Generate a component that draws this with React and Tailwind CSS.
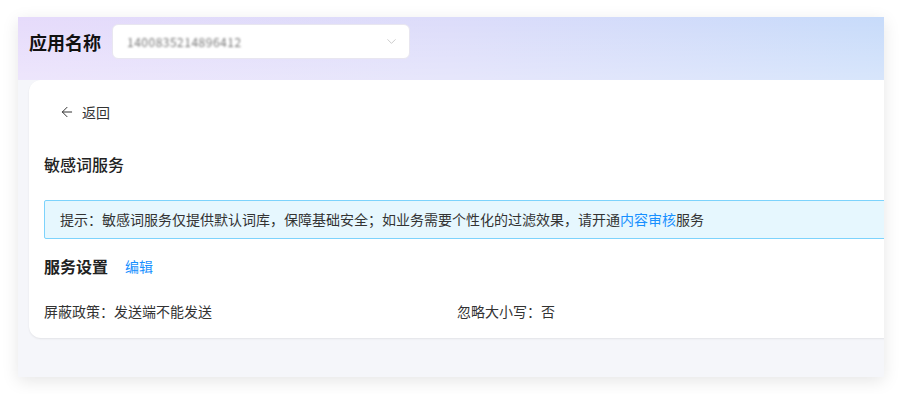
import { ArrowLeft, ChevronDown } from 'lucide-react';

const font = { fontFamily: '"Noto Sans CJK SC", "Noto Sans", sans-serif' };

function Header() {
  return (
    <div className="h-[63px] shrink-0 flex items-start gap-[11px] pl-[11px] pt-[7px] bg-[linear-gradient(to_right,#e6dbfb,#dcdcfa_50%,#c7dbfa)] relative">
      <div className="absolute inset-0 bg-[linear-gradient(to_bottom,rgba(255,255,255,0),rgba(255,255,255,0.3))]" />
      <span className="relative h-[35px] flex items-center text-[18px] leading-[26px] font-bold text-[#111]">应用名称</span>
      <div className="relative w-[298px] h-[35px] bg-white rounded-[6px] border border-[#e8e6f0] flex items-center justify-between pl-[14px] pr-[10px]">
        <span className="text-[12px] text-[#777] blur-[1.2px] tracking-[0.5px]">1400835214896412</span>
        <ChevronDown size={15} strokeWidth={1.1} className="text-[#b5b5b5]" />
      </div>
    </div>
  );
}

function Card() {
  return (
    <div className="ml-[11px] w-[880px] h-[258px] shrink-0 bg-white rounded-tl-[12px] rounded-bl-[12px] shadow-[0_1px_2px_rgba(0,0,0,0.08)] pl-[15px] text-[#333]">
      <div className="pt-[22px] flex items-center gap-[7px] pl-[15px] text-[14px] leading-[20px]">
        <ArrowLeft size={16} strokeWidth={1.5} className="text-[#333]" />
        <span>返回</span>
      </div>
      <div className="mt-[30px] text-[16px] leading-[24px] font-medium text-[#222]">敏感词服务</div>
      <div className="mt-[24px] h-[39px] flex items-center pl-[15px] bg-[#e6f7fe] border border-[#7dd3fc] rounded-[2px] text-[14px] text-[#333]">
        提示：敏感词服务仅提供默认词库，保障基础安全；如业务需要个性化的过滤效果，请开通<span className="text-[#1890ff]">内容审核</span>服务
      </div>
      <div className="mt-[15px] flex items-center gap-[17px] leading-[24px]">
        <span className="text-[16px] font-semibold text-[#222]">服务设置</span>
        <span className="text-[14px] text-[#1890ff]">编辑</span>
      </div>
      <div className="mt-[23px] grid grid-cols-[413px_1fr] text-[14px] leading-[20px] text-[#333]">
        <span>屏蔽政策：发送端不能发送</span>
        <span>忽略大小写：否</span>
      </div>
    </div>
  );
}

export default function App() {
  return (
    <div className="w-[901px] h-[394px] bg-white pt-[17px] pl-[18px]" style={font}>
      <div className="w-[866px] h-[360px] overflow-hidden flex flex-col bg-[#f5f6fa] shadow-[0_4px_16px_rgba(0,0,0,0.1)]">
        <Header />
        <Card />
      </div>
    </div>
  );
}
